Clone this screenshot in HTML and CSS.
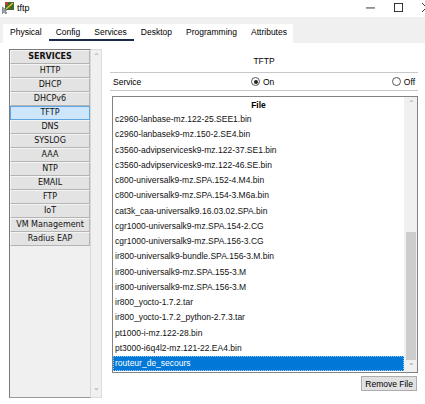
FILE: index.html
```html
<!DOCTYPE html>
<html lang="en">
<head>
  <meta charset="UTF-8">
  <title>tftp</title>
  <link rel="stylesheet" href="styles.css">
</head>
<body>
  <div class="window">
    <div class="titlebar">
      <svg class="app-icon" width="12" height="12" viewBox="0 0 12 12">
        <rect x="3" y="0" width="9" height="8" fill="#3d6b2a"/>
        <path d="M4 7 L11 1" stroke="#e8c23a" stroke-width="1.4"/>
        <rect x="3" y="0" width="3" height="3" fill="#b8432e"/>
        <path d="M0 5 L0 12 L2 10 L4 12 L5 11 L3 9 L5 8 Z" fill="#9aa4ad" stroke="#4a5560" stroke-width="0.5"/>
      </svg>
      <span class="title">tftp</span>
      <div class="controls">
        <svg width="10" height="10" viewBox="0 0 10 10"><path d="M0 5.5 H10" stroke="#222" stroke-width="1"/></svg>
        <svg width="10" height="10" viewBox="0 0 10 10"><rect x="0.5" y="0.5" width="9" height="9" fill="none" stroke="#222" stroke-width="1"/></svg>
        <svg width="10" height="10" viewBox="0 0 10 10"><path d="M0 0 L10 10 M10 0 L0 10" stroke="#222" stroke-width="1"/></svg>
      </div>
    </div>

    <div class="tabbar">
      <div class="tabs">
        <span class="tab">Physical</span>
        <span class="tab active">Config</span>
        <span class="tab active">Services</span>
        <span class="tab">Desktop</span>
        <span class="tab">Programming</span>
        <span class="tab">Attributes</span>
      </div>
    </div>

    <div class="main">
      <div class="sidebar">
        <div class="svc-list">
          <div class="svc head">SERVICES</div>
          <div class="svc">HTTP</div>
          <div class="svc">DHCP</div>
          <div class="svc">DHCPv6</div>
          <div class="svc selected">TFTP</div>
          <div class="svc">DNS</div>
          <div class="svc">SYSLOG</div>
          <div class="svc">AAA</div>
          <div class="svc">NTP</div>
          <div class="svc">EMAIL</div>
          <div class="svc">FTP</div>
          <div class="svc">IoT</div>
          <div class="svc">VM Management</div>
          <div class="svc">Radius EAP</div>
        </div>
        <div class="vscroll">
          <span class="arrow">&#8963;</span>
          <span class="track"></span>
          <span class="arrow down">&#8964;</span>
        </div>
      </div>

      <div class="panel">
        <div class="panel-title">TFTP</div>
        <div class="service-row">
          <span class="label">Service</span>
          <label class="radio on"><span class="dot"></span>On</label>
          <label class="radio"><span class="dot"></span>Off</label>
        </div>

        <div class="filebox">
          <div class="files">
            <div class="files-head">File</div>
            <div class="files-body">
              <div class="file">c2960-lanbase-mz.122-25.SEE1.bin</div>
              <div class="file">c2960-lanbasek9-mz.150-2.SE4.bin</div>
              <div class="file">c3560-advipservicesk9-mz.122-37.SE1.bin</div>
              <div class="file">c3560-advipservicesk9-mz.122-46.SE.bin</div>
              <div class="file">c800-universalk9-mz.SPA.152-4.M4.bin</div>
              <div class="file">c800-universalk9-mz.SPA.154-3.M6a.bin</div>
              <div class="file">cat3k_caa-universalk9.16.03.02.SPA.bin</div>
              <div class="file">cgr1000-universalk9-mz.SPA.154-2.CG</div>
              <div class="file">cgr1000-universalk9-mz.SPA.156-3.CG</div>
              <div class="file">ir800-universalk9-bundle.SPA.156-3.M.bin</div>
              <div class="file">ir800-universalk9-mz.SPA.155-3.M</div>
              <div class="file">ir800-universalk9-mz.SPA.156-3.M</div>
              <div class="file">ir800_yocto-1.7.2.tar</div>
              <div class="file">ir800_yocto-1.7.2_python-2.7.3.tar</div>
              <div class="file">pt1000-i-mz.122-28.bin</div>
              <div class="file">pt3000-i6q4l2-mz.121-22.EA4.bin</div>
              <div class="file selected">routeur_de_secours</div>
            </div>
          </div>
          <div class="vscroll files-scroll">
            <span class="arrow">&#8963;</span>
            <span class="track"><span class="thumb"></span></span>
            <span class="arrow down">&#8964;</span>
          </div>
        </div>

        <div class="actions">
          <button class="btn">Remove File</button>
        </div>
      </div>
    </div>
  </div>
</body>
</html>
```

FILE: styles.css
```css
body {
  margin: 0;
  background: #ffffff;
  font-family: "Liberation Sans", Arial, sans-serif;
  color: #000;
}
.window {
  width: 425px;
  height: 404px;
  overflow: hidden;
  display: flex;
  flex-direction: column;
}

/* title bar */
.titlebar {
  height: 17px;
  display: flex;
  align-items: center;
  background: #fff;
}
.app-icon { margin: 0 3px 2px 2px; }
.title {
  font-size: 9px;
  color: #000;
  margin-bottom: 2px;
}
.controls {
  margin-left: auto;
  display: flex;
  gap: 19px;
  margin-right: -6px;
  margin-bottom: 2px;
}
.controls svg { width: 9px; height: 9px; }

/* tabs */
.tabbar {
  height: 19px;
  padding-top: 7px;
  background: #f0f0f0;
}
.tabs {
  width: 290px;
  height: 19px;
  margin-left: 3px;
  background: #fff;
  display: flex;
  align-items: flex-start;
}
.tab {
  padding: 0 7px;
  height: 15px;
  line-height: 17px;
  font-size: 8.5px;
}
.tab.active { border-bottom: 2px solid #1b2a48; }

/* main area */
.main {
  display: flex;
  gap: 8px;
  flex: 1;
}
.sidebar {
  display: flex;
  padding: 6px 0 0 9px;
  height: 349px;
}
.svc-list {
  width: 80px;
  border: 1px solid #7a7a7a;
  border-right-color: #d8d8d8;
  border-bottom-color: #9a9a9a;
  background: #f0f0f0;
  font-family: "DejaVu Sans", Verdana, sans-serif;
  font-size: 8px;
}
.svc {
  height: 12px;
  line-height: 12px;
  text-align: center;
  background: #e3e3e3;
  border: 1px solid #b4b4b4;
  border-top-color: #f4f4f4;
  border-left-color: #f4f4f4;
  color: #111;
}
.svc.head { font-weight: bold; }
.svc.selected {
  background: #cde6fb;
  border: 1px solid #5fa6e3;
}

.vscroll {
  width: 10px;
  display: flex;
  flex-direction: column;
  background: #f0f0f0;
  border: 1px solid #dcdcdc;
  border-left: none;
  color: #a0a0a0;
  font-size: 8px;
}
.vscroll .arrow {
  height: 12px;
  line-height: 14px;
  text-align: center;
}
.vscroll .arrow.down { line-height: 6px; }
.vscroll .track { flex: 1; position: relative; }

/* right panel */
.panel {
  width: 308px;
  display: flex;
  flex-direction: column;
  font-size: 8.5px;
}
.panel-title {
  text-align: center;
  padding: 13px 0 5px;
  line-height: 11px;
  border-bottom: 1px solid #c8c8c8;
}
.service-row {
  display: flex;
  align-items: center;
  height: 17px;
  padding-left: 3px;
  border-bottom: 1px solid #c8c8c8;
}
.service-row .label { width: 138px; }
.radio {
  display: flex;
  align-items: center;
  gap: 3px;
}
.radio:last-child { margin-left: auto; margin-right: 3px; }
.dot {
  width: 9px;
  height: 9px;
  border: 1px solid #555;
  border-radius: 50%;
  box-sizing: border-box;
  background: #fff;
  display: flex;
  align-items: center;
  justify-content: center;
}
.radio.on .dot::after {
  content: "";
  width: 4px;
  height: 4px;
  border-radius: 50%;
  background: #222;
}

.filebox {
  margin: 5px 0 0 2px;
  width: 304px;
  height: 275px;
  border: 1px solid #828282;
  display: flex;
}
.files {
  flex: 1;
  display: flex;
  flex-direction: column;
  overflow: hidden;
}
.files-head {
  height: 15px;
  line-height: 16px;
  text-align: center;
  font-weight: bold;
  font-size: 8.5px;
  flex-shrink: 0;
}
.file {
  height: 15.25px;
  line-height: 15px;
  padding-left: 2px;
  white-space: nowrap;
  color: #111;
}
.file.selected {
  background: #0078d7;
  color: #fff;
  border: 1px dotted #9cc7ee;
  box-sizing: border-box;
  line-height: 13px;
  padding-left: 1px;
}
.files-scroll {
  width: 12px;
  border: none;
  border-left: 1px solid #f0f0f0;
}
.thumb {
  position: absolute;
  left: 1px;
  right: 1px;
  top: 123px;
  bottom: 0;
  background: #cdcdcd;
}

.actions {
  display: flex;
  justify-content: flex-end;
  padding-top: 3px;
}
.btn {
  font-family: "Liberation Sans", Arial, sans-serif;
  font-size: 8.5px;
  height: 15px;
  padding: 0 3px;
  background: #e1e1e1;
  border: 1px solid #adadad;
  margin-right: 1px;
  color: #000;
}
```
